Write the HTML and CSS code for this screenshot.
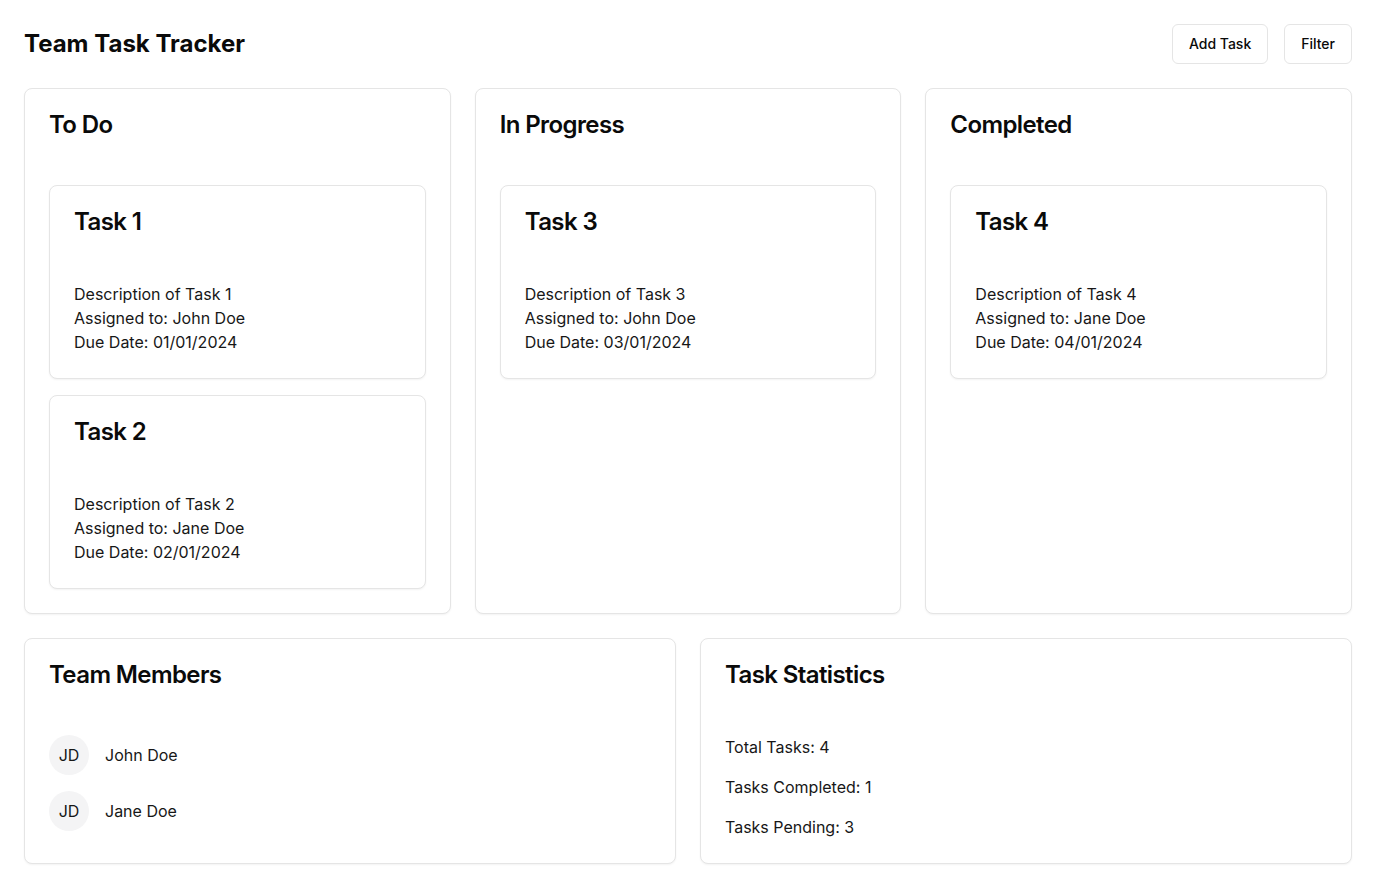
FILE: index.html
```html
<!DOCTYPE html>
<html lang="en">
<head>
<meta charset="utf-8">
<title>Team Task Tracker</title>
<link rel="stylesheet" href="styles.css">
</head>
<body>
<div class="page">
  <header class="topbar">
    <h1 class="app-title">Team Task Tracker</h1>
    <div class="actions">
      <button class="btn">Add Task</button>
      <button class="btn">Filter</button>
    </div>
  </header>

  <section class="board">
    <div class="card column">
      <div class="card-header"><h2 class="card-title">To Do</h2></div>
      <div class="card-content stack">
        <div class="card task">
          <div class="card-header"><h3 class="card-title">Task 1</h3></div>
          <div class="card-content">
            <p>Description of Task 1</p>
            <p>Assigned to: John Doe</p>
            <p>Due Date: 01/01/2024</p>
          </div>
        </div>
        <div class="card task">
          <div class="card-header"><h3 class="card-title">Task 2</h3></div>
          <div class="card-content">
            <p>Description of Task 2</p>
            <p>Assigned to: Jane Doe</p>
            <p>Due Date: 02/01/2024</p>
          </div>
        </div>
      </div>
    </div>

    <div class="card column">
      <div class="card-header"><h2 class="card-title">In Progress</h2></div>
      <div class="card-content stack">
        <div class="card task">
          <div class="card-header"><h3 class="card-title">Task 3</h3></div>
          <div class="card-content">
            <p>Description of Task 3</p>
            <p>Assigned to: John Doe</p>
            <p>Due Date: 03/01/2024</p>
          </div>
        </div>
      </div>
    </div>

    <div class="card column">
      <div class="card-header"><h2 class="card-title">Completed</h2></div>
      <div class="card-content stack">
        <div class="card task">
          <div class="card-header"><h3 class="card-title">Task 4</h3></div>
          <div class="card-content">
            <p>Description of Task 4</p>
            <p>Assigned to: Jane Doe</p>
            <p>Due Date: 04/01/2024</p>
          </div>
        </div>
      </div>
    </div>
  </section>

  <section class="bottom">
    <div class="card">
      <div class="card-header"><h2 class="card-title">Team Members</h2></div>
      <div class="card-content members">
        <div class="member">
          <span class="avatar">JD</span>
          <span class="member-name">John Doe</span>
        </div>
        <div class="member">
          <span class="avatar">JD</span>
          <span class="member-name">Jane Doe</span>
        </div>
      </div>
    </div>

    <div class="card">
      <div class="card-header"><h2 class="card-title">Task Statistics</h2></div>
      <div class="card-content stats">
        <p>Total Tasks: 4</p>
        <p>Tasks Completed: 1</p>
        <p>Tasks Pending: 3</p>
      </div>
    </div>
  </section>
</div>
</body>
</html>
```

FILE: styles.css
```css
* {
  box-sizing: border-box;
}

html, body {
  margin: 0;
  padding: 0;
  background: #ffffff;
}

body {
  font-family: Inter, "Noto Sans", "Liberation Sans", sans-serif;
  color: #0a0a0a;
  font-size: 16px;
  line-height: 24px;
}

.page {
  padding: 24px;
  display: flex;
  flex-direction: column;
  gap: 24px;
}

.topbar {
  display: flex;
  align-items: center;
  justify-content: space-between;
  height: 40px;
}

.app-title {
  margin: 0;
  font-size: 24px;
  line-height: 32px;
  font-weight: 700;
}

.actions {
  display: flex;
  gap: 16px;
}

.btn {
  height: 40px;
  padding: 0 16px 1px;
  border: 1px solid #e5e5e5;
  border-radius: 6px;
  background: #ffffff;
  font-family: inherit;
  font-size: 14px;
  line-height: 20px;
  font-weight: 500;
  color: #0a0a0a;
  cursor: pointer;
}

.card {
  border: 1px solid #e5e5e5;
  border-radius: 8px;
  background: #ffffff;
  box-shadow: 0 1px 2px rgba(0, 0, 0, 0.05);
}

.card-header {
  padding: 24px;
}

.card-title {
  margin: 0;
  font-size: 24px;
  line-height: 24px;
  font-weight: 600;
  letter-spacing: -0.6px;
}

.card-content {
  padding: 24px;
}

.card-content p {
  margin: 0;
  color: #171717;
}

.board {
  display: grid;
  grid-template-columns: repeat(3, 1fr);
  gap: 24px;
}

.stack {
  display: flex;
  flex-direction: column;
  gap: 16px;
}

.bottom {
  display: grid;
  grid-template-columns: repeat(2, 1fr);
  gap: 24px;
}

.members {
  display: flex;
  flex-direction: column;
  gap: 16px;
}

.member {
  display: flex;
  align-items: center;
  gap: 16px;
}

.avatar {
  width: 40px;
  height: 40px;
  border-radius: 50%;
  background: #f4f4f5;
  display: flex;
  align-items: center;
  justify-content: center;
  font-size: 16px;
  color: #171717;
}

.member-name {
  color: #171717;
}

.stats {
  display: flex;
  flex-direction: column;
  gap: 16px;
}
```
